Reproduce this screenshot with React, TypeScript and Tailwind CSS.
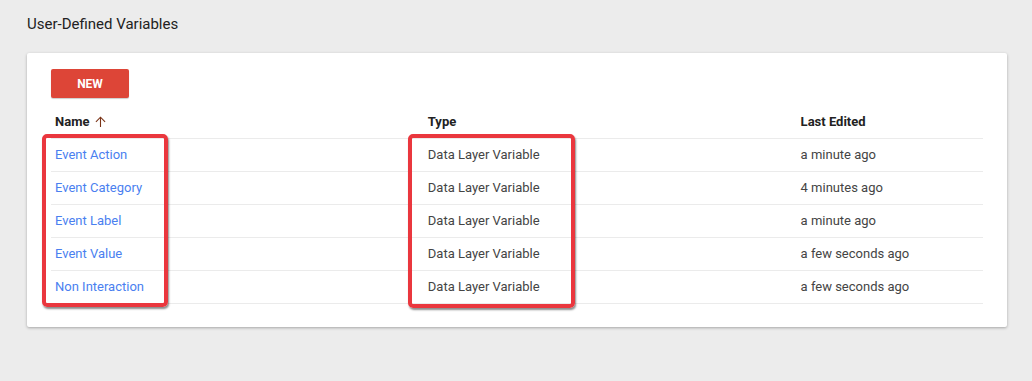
import React from 'react'

// rows of the variables table
const rows = [
  { name: 'Event Action', type: 'Data Layer Variable', edited: 'a minute ago' },
  { name: 'Event Category', type: 'Data Layer Variable', edited: '4 minutes ago' },
  { name: 'Event Label', type: 'Data Layer Variable', edited: 'a minute ago' },
  { name: 'Event Value', type: 'Data Layer Variable', edited: 'a few seconds ago' },
  { name: 'Non Interaction', type: 'Data Layer Variable', edited: 'a few seconds ago' },
]

export default function App() {
  return (
    <div
      className="h-[381px] w-[1032px] overflow-hidden bg-[#ececec] pl-[27px] pt-[14px] text-[13px] text-[#444]"
      style={{ fontFamily: 'Roboto, "Liberation Sans", sans-serif' }}
    >
      <h2 className="h-[20px] text-[15px] leading-[20px] text-[#222]">User-Defined Variables</h2>

      <div className="relative mt-[19px] w-[980px] rounded-[2px] bg-white px-[24px] pb-[23px] pt-[16px] shadow-[0_1px_3px_rgba(0,0,0,0.3)]">
        <button className="flex h-[29px] w-[78px] items-center justify-center rounded-[2px] bg-[#dd4537] text-[12px] font-bold text-white shadow-[0_1px_1px_rgba(0,0,0,0.2)]">
          NEW
        </button>

        <div className="mt-[6px]">
          <div className="grid h-[35px] grid-cols-[2fr_2fr_1fr] items-center border-b border-[#ebebeb] pt-[1px] font-bold text-[#222]">
            <div className="flex items-center gap-[5px] pl-[4px]">
              Name
              <svg width="13" height="13" viewBox="0 0 24 24" className="-mt-[1px] text-[#7a3316]">
                <path d="M12 22V4M3.5 12.5L12 4l8.5 8.5" fill="none" stroke="currentColor" strokeWidth="2" />
              </svg>
            </div>
            <div className="pl-[4px]">Type</div>
            <div className="pl-[4px]">Last Edited</div>
          </div>
          {rows.map((r) => (
            <div
              key={r.name}
              className="grid h-[33px] grid-cols-[2fr_2fr_1fr] items-center border-b border-[#ebebeb]"
            >
              <div className="pl-[4px] text-[#4a7ff0]">{r.name}</div>
              <div className="pl-[4px]">{r.type}</div>
              <div className="pl-[4px]">{r.edited}</div>
            </div>
          ))}
        </div>

        {/* highlight boxes drawn over the table */}
        <div className="absolute left-[15px] top-[81px] h-[173px] w-[126px] rounded-[5px] border-[4px] border-[#ea373e] shadow-[1px_2px_2px_rgba(0,0,0,0.45)]" />
        <div className="absolute left-[381px] top-[81px] h-[174px] w-[167px] rounded-[5px] border-[4px] border-[#ea373e] shadow-[1px_2px_2px_rgba(0,0,0,0.45)]" />
      </div>
    </div>
  )
}
